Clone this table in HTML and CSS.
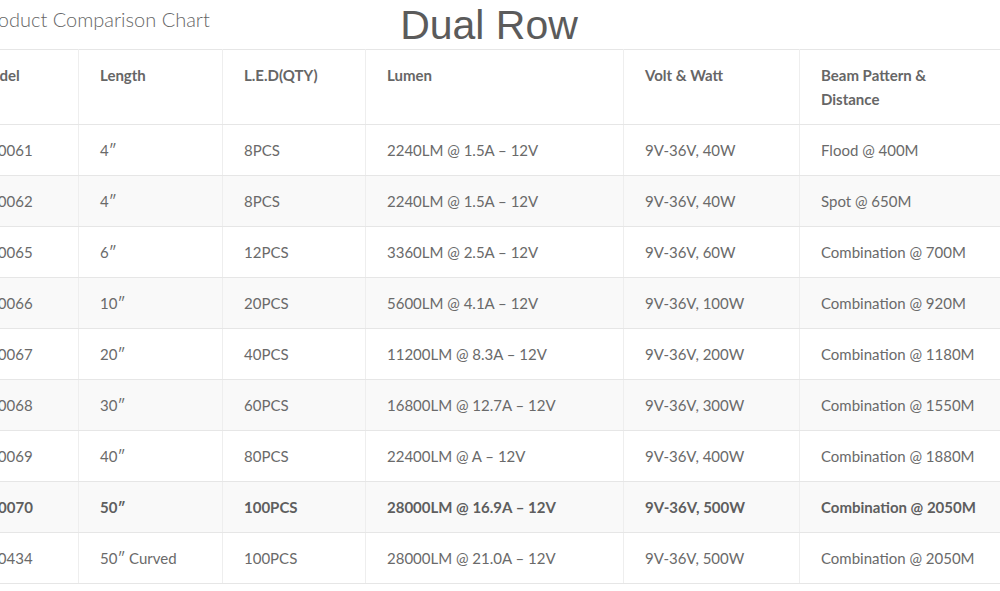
FILE: index.html
```html
<!DOCTYPE html>
<html lang="en">
<head>
<meta charset="utf-8">
<title>Dual Row – Product Comparison Chart</title>
<link rel="stylesheet" href="styles.css">
</head>
<body>
<div class="page">
  <header class="head">
    <h2 class="chart-title">Product Comparison Chart</h2>
    <h1 class="series">Dual Row</h1>
  </header>
  <table class="chart">
    <colgroup>
      <col class="c-model"><col class="c-len"><col class="c-led"><col class="c-lum"><col class="c-volt"><col class="c-beam">
    </colgroup>
    <thead>
      <tr><th>Model</th><th>Length</th><th>L.E.D(QTY)</th><th>Lumen</th><th>Volt &amp; Watt</th><th>Beam Pattern &amp;<br>Distance</th></tr>
    </thead>
    <tbody>
      <tr><td>DR0061</td><td>4″</td><td>8PCS</td><td>2240LM @ 1.5A – 12V</td><td>9V-36V, 40W</td><td>Flood @ 400M</td></tr>
      <tr><td>DR0062</td><td>4″</td><td>8PCS</td><td>2240LM @ 1.5A – 12V</td><td>9V-36V, 40W</td><td>Spot @ 650M</td></tr>
      <tr><td>DR0065</td><td>6″</td><td>12PCS</td><td>3360LM @ 2.5A – 12V</td><td>9V-36V, 60W</td><td>Combination @ 700M</td></tr>
      <tr><td>DR0066</td><td>10″</td><td>20PCS</td><td>5600LM @ 4.1A – 12V</td><td>9V-36V, 100W</td><td>Combination @ 920M</td></tr>
      <tr><td>DR0067</td><td>20″</td><td>40PCS</td><td>11200LM @ 8.3A – 12V</td><td>9V-36V, 200W</td><td>Combination @ 1180M</td></tr>
      <tr><td>DR0068</td><td>30″</td><td>60PCS</td><td>16800LM @ 12.7A – 12V</td><td>9V-36V, 300W</td><td>Combination @ 1550M</td></tr>
      <tr><td>DR0069</td><td>40″</td><td>80PCS</td><td>22400LM @ A – 12V</td><td>9V-36V, 400W</td><td>Combination @ 1880M</td></tr>
      <tr class="strong"><td>DR0070</td><td>50″</td><td>100PCS</td><td>28000LM @ 16.9A – 12V</td><td>9V-36V, 500W</td><td>Combination @ 2050M</td></tr>
      <tr><td>DR0434</td><td>50″ Curved</td><td>100PCS</td><td>28000LM @ 21.0A – 12V</td><td>9V-36V, 500W</td><td>Combination @ 2050M</td></tr>
    </tbody>
  </table>
</div>
</body>
</html>
```

FILE: styles.css
```css
html, body {
  margin: 0;
  padding: 0;
  overflow: hidden;
  background: #fff;
}

body {
  font-family: Lato, "Open Sans", sans-serif;
  color: #666;
}

.page {
  margin-left: -45px;
  width: 1068px;
}

.head {
  display: grid;
  height: 49px;
}

.chart-title,
.series {
  grid-area: 1 / 1;
  margin: 0;
}

.chart-title {
  justify-self: start;
  align-self: start;
  padding: 7px 0 0 25px;
  font-family: Lato, sans-serif;
  font-weight: 300;
  font-size: 20px;
  color: #666;
}

.series {
  justify-self: center;
  align-self: start;
  padding-top: 1px;
  font-family: "Liberation Sans", Arial, sans-serif;
  font-weight: 400;
  font-size: 41px;
  line-height: 49px;
  color: #5b5b5b;
}

.chart {
  width: 1068px;
  table-layout: fixed;
  border-collapse: collapse;
  font-size: 15px;
  line-height: 24px;
}

.c-model { width: 123px; }
.c-len { width: 144px; }
.c-led { width: 143px; }
.c-lum { width: 258px; }
.c-volt { width: 176px; }
.c-beam { width: 224px; }

.chart th,
.chart td {
  text-align: left;
  vertical-align: top;
  padding: 13px 21px;
  border-top: 1px solid #e6e6e6;
  border-bottom: 1px solid #e6e6e6;
  border-left: 1px solid #eeeeee;
  border-right: 1px solid #eeeeee;
  white-space: nowrap;
}

.chart th {
  font-weight: 700;
  color: #666;
}

.chart td {
  font-weight: 400;
  color: #6a6a6a;
}

.chart tbody tr:nth-child(even) td {
  background: #f9f9f9;
}

.chart tr.strong td {
  font-weight: 700;
  color: #5e5e5e;
}
```
